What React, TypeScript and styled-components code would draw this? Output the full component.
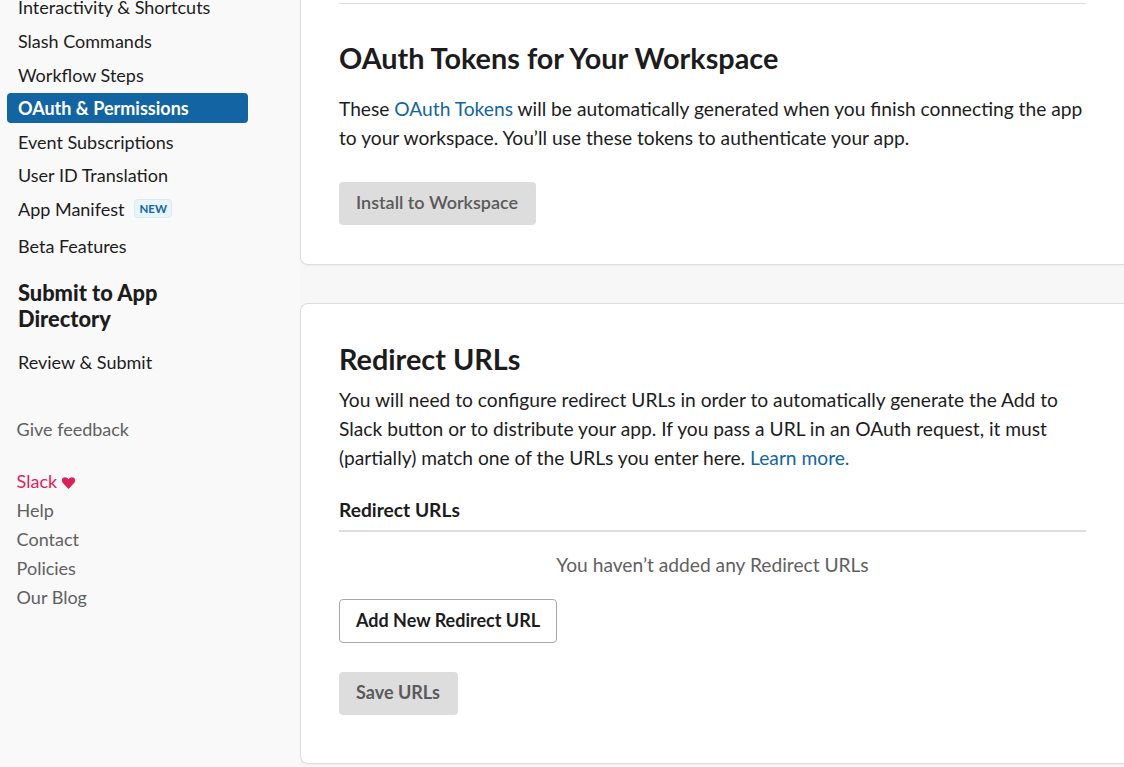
import React from "react";
import styled, { createGlobalStyle } from "styled-components";

const Global = createGlobalStyle`
  html, body { margin: 0; padding: 0; height: 100%; overflow: hidden; background: #f7f7f7; }
  body { font-family: Lato, "Liberation Sans", sans-serif; color: #1d1c1d; font-size: 18px; }
`;
const Page = styled.div`
  display: flex;
  width: 1124px;
  height: 767px;
  overflow: hidden;
`;
const Sidebar = styled.nav`
  width: 300px;
  flex: none;
  background: #f9f9f9;
  padding: 0 52px 0 7px;
  box-sizing: border-box;
  margin-top: -7.6px;
  display: flex;
  flex-direction: column;
`;
const NavItem = styled.a<{ $active?: boolean }>`
  display: flex;
  align-items: center;
  gap: 10px;
  height: 30px;
  margin-bottom: 3.6px;
  padding: 0 11px;
  border-radius: 4px;
  font-size: 18px;
  line-height: 30px;
  white-space: nowrap;
  background: ${(p) => (p.$active ? "#1264a3" : "transparent")};
  color: ${(p) => (p.$active ? "#fff" : "#1d1c1d")};
  font-weight: ${(p) => (p.$active ? 700 : 400)};
`;
const NewBadge = styled.span`
  display: inline-block;
  height: 19px;
  line-height: 17px;
  padding: 0 4px;
  box-sizing: border-box;
  font-size: 11.5px;
  font-weight: 700;
  color: #1264a3;
  background: #e8f5fa;
  border: 1px solid #d3ebf5;
  border-radius: 4px;
`;
const BetaItem = styled(NavItem)`
  margin-top: 3px;
`;
const SectionTitle = styled.h3`
  margin: 15.6px 0 15px;
  padding: 0 11px;
  font-size: 21.8px;
  line-height: 26px;
  font-weight: 900;
  color: #1d1c1d;
`;
const Feedback = styled.a`
  display: block;
  margin-top: 35px;
  padding-left: 9.6px;
  font-size: 18px;
  line-height: 29px;
  color: #616061;
`;
const FooterLinks = styled.ul`
  list-style: none;
  margin: 23px 0 0;
  padding: 0 0 0 9.6px;
`;
const FooterLink = styled.li<{ $accent?: boolean }>`
  font-size: 18px;
  line-height: 29px;
  color: ${(p) => (p.$accent ? "#e01e5a" : "#616061")};
`;
const Heart = styled.svg`
  width: 13px;
  height: 12px;
  margin-left: 5px;
  vertical-align: -1px;
  fill: #e01e5a;
`;
const Main = styled.main`
  flex: 1;
  min-width: 0;
  display: flex;
  flex-direction: column;
  gap: 38px;
  margin-top: -40px;
`;
const Card = styled.section`
  background: #fff;
  border: 1px solid #dddddd;
  border-right: none;
  border-radius: 8px 0 0 8px;
  box-sizing: border-box;
  padding: 0 38px 0 38px;
  box-shadow: 0 1px 2px rgba(0, 0, 0, 0.04);
  position: relative;
`;
const TopCard = styled(Card)`
  height: 305px;
  border-top: none;
`;
const BottomCard = styled(Card)`
  height: 461px;
  padding-top: 35px;
`;
const Rule = styled.hr`
  border: 0;
  border-top: 1px solid #dddddd;
  margin: 43px 0 0;
`;
const Title = styled.h2<{ $tight?: boolean }>`
  margin: ${(p) => (p.$tight ? "0 0 6px" : "34px 0 16px")};
  font-size: 28.8px;
  line-height: 40px;
  font-weight: 700;
  color: #1d1c1d;
`;
const Para = styled.p`
  margin: 0;
  font-size: 19.2px;
  line-height: 29px;
  color: #1d1c1d;
`;
const Link = styled.a`
  color: #1264a3;
`;
const Button = styled.button<{ $outline?: boolean; $strong?: boolean }>`
  display: block;
  height: 43px;
  padding: 0 17px 3px;
  border-radius: 4px;
  box-sizing: border-box;
  font-family: inherit;
  font-size: 18px;
  font-weight: ${(p) => (p.$strong || p.$outline ? 700 : 600)};
  color: ${(p) => (p.$outline ? "#1d1c1d" : "#5a5a5a")};
  background: ${(p) => (p.$outline ? "#fff" : "#dddddd")};
  border: ${(p) => (p.$outline ? "1px solid #a8a8a8" : "none")};
  white-space: nowrap;
`;
const InstallButton = styled(Button)`
  margin-top: 30px;
  padding-right: 18px;
`;
const SubHead = styled.div`
  margin-top: 23px;
  padding-bottom: 6px;
  border-bottom: 2px solid #dddddd;
  font-size: 19.2px;
  line-height: 29px;
  font-weight: 700;
`;
const Empty = styled.div`
  margin-top: 18px;
  text-align: center;
  font-size: 19.2px;
  line-height: 29px;
  color: #616061;
`;
const AddButton = styled(Button)`
  margin-top: 20px;
  height: 44px;
  padding: 0 16px 3px;
`;
const SaveButton = styled(Button)`
  margin-top: 29px;
  padding-right: 18px;
`;

export default function App() {
  return (
    <Page>
      <Global />
      <Sidebar>
        <NavItem>Interactivity &amp; Shortcuts</NavItem>
        <NavItem>Slash Commands</NavItem>
        <NavItem>Workflow Steps</NavItem>
        <NavItem $active>OAuth &amp; Permissions</NavItem>
        <NavItem>Event Subscriptions</NavItem>
        <NavItem>User ID Translation</NavItem>
        <NavItem>
          App Manifest <NewBadge>NEW</NewBadge>
        </NavItem>
        <BetaItem>Beta Features</BetaItem>
        <SectionTitle>Submit to App Directory</SectionTitle>
        <NavItem>Review &amp; Submit</NavItem>
        <Feedback>Give feedback</Feedback>
        <FooterLinks>
          <FooterLink $accent>
            Slack
            <Heart viewBox="0 0 24 22">
              <path d="M12 22 2 11.5C-1 8-.5 3.5 2 1.5 5-.8 9.500 0 12 4c2.500-4 7-4.800 10-2.500 2.500 2 3 6.500 0 10z" />
            </Heart>
          </FooterLink>
          <FooterLink>Help</FooterLink>
          <FooterLink>Contact</FooterLink>
          <FooterLink>Policies</FooterLink>
          <FooterLink>Our Blog</FooterLink>
        </FooterLinks>
      </Sidebar>
      <Main>
        <TopCard>
          <Rule />
          <Title>OAuth Tokens for Your Workspace</Title>
          <Para>
            These <Link>OAuth Tokens</Link> will be automatically generated when you finish connecting the app
            <br />
            to your workspace. You’ll use these tokens to authenticate your app.
          </Para>
          <InstallButton>Install to Workspace</InstallButton>
        </TopCard>
        <BottomCard>
          <Title $tight>Redirect URLs</Title>
          <Para>
            You will need to configure redirect URLs in order to automatically generate the Add to
            <br />
            Slack button or to distribute your app. If you pass a URL in an OAuth request, it must
            <br />
            (partially) match one of the URLs you enter here. <Link>Learn more.</Link>
          </Para>
          <SubHead>Redirect URLs</SubHead>
          <Empty>You haven’t added any Redirect URLs</Empty>
          <AddButton $outline>Add New Redirect URL</AddButton>
          <SaveButton $strong>Save URLs</SaveButton>
        </BottomCard>
      </Main>
    </Page>
  );
}
